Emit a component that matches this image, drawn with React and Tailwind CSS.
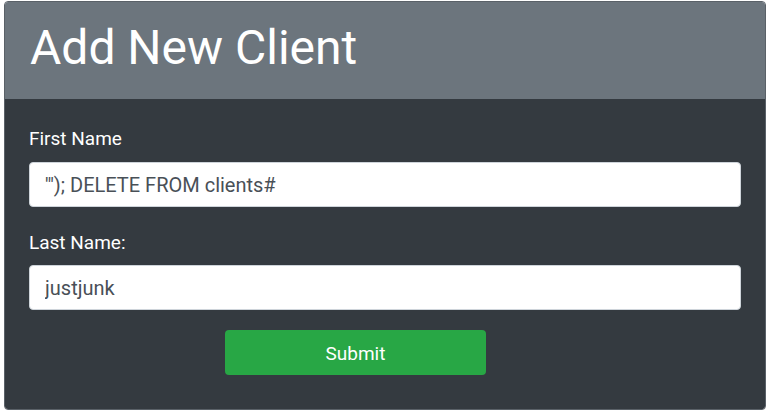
export default function App() {
  return (
    <div className="w-[773px] h-[415px] bg-white pt-px pl-[4px] font-['Roboto',sans-serif]">
      <div className="w-[762px] rounded-[4px] border border-[#5a6168] overflow-hidden">
        {/* Header */}
        <div className="h-[97px] bg-[#6c757d] px-[25px] pt-[18px]">
          <h1 className="text-[48px] leading-[56px] text-white">Add New Client</h1>
        </div>

        {/* Form */}
        <div className="bg-[#343a40] px-[24px] pt-[28px] pb-[34px]">
          <label className="block text-[19px] leading-[24px] text-white">First Name</label>
          <input
            type="text"
            readOnly
            value={"'\"); DELETE FROM clients#"}
            className="mt-[11px] block w-full h-[45px] rounded-[4px] border border-[#ced4da] bg-white px-[15px] text-[20px] text-[#495057] outline-none"
          />

          <label className="mt-[24px] block text-[19px] leading-[24px] text-white">Last Name:</label>
          <input
            type="text"
            readOnly
            value="justjunk"
            className="mt-[10px] block w-full h-[45px] rounded-[4px] border border-[#ced4da] bg-white px-[15px] text-[20px] text-[#495057] outline-none"
          />

          <button className="mt-[20px] ml-[196px] block w-[261px] h-[45px] pt-[4px] rounded-[4px] bg-[#28a745] text-[19px] text-white">
            Submit
          </button>
        </div>
      </div>
    </div>
  );
}
